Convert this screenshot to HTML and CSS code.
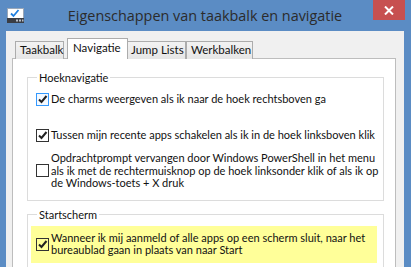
FILE: index.html
```html
<!DOCTYPE html>
<html lang="nl">
<head>
    <meta charset="UTF-8">
    <title>Eigenschappen van taakbalk en navigatie</title>
    <link rel="stylesheet" href="styles.css">
</head>
<body>

<div class="window">
    <!-- Title bar -->
    <div class="titlebar">
        <svg class="app-icon" width="18" height="16" viewBox="0 0 18 16">
            <rect x="0.5" y="0.5" width="16" height="10" fill="#fff" stroke="#9aa7b8"/>
            <path d="M4 5.5 L6.5 8 L11.5 2" fill="none" stroke="#1f7fe0" stroke-width="1.8"/>
            <rect x="0" y="10" width="17" height="5" fill="#3a3d44"/>
            <rect x="9" y="11.5" width="2" height="2" fill="#b8bec8"/>
            <rect x="12" y="11.5" width="2" height="2" fill="#b8bec8"/>
            <rect x="15" y="11.5" width="1.5" height="2" fill="#b8bec8"/>
        </svg>
        <div class="title">Eigenschappen van taakbalk en navigatie</div>
        <div class="close">
            <svg width="10" height="9" viewBox="0 0 10 9">
                <path d="M1 0.5 L9 8.5 M9 0.5 L1 8.5" stroke="#fff" stroke-width="2"/>
            </svg>
        </div>
    </div>

    <div class="dialog">
        <!-- Tabs -->
        <div class="tabs">
            <div class="tab tab-taakbalk">Taakbalk</div>
            <div class="tab tab-navigatie active">Navigatie</div>
            <div class="tab tab-jump">Jump Lists</div>
            <div class="tab tab-werkbalken">Werkbalken</div>
        </div>

        <div class="panel">
            <fieldset class="group corner">
                <legend>Hoeknavigatie</legend>
                <label class="option row-1">
                    <span class="box focus">
                        <svg width="11" height="11" viewBox="0 0 11 11"><path d="M2 5.5 L4.5 8 L9.5 2" fill="none" stroke="#222" stroke-width="2"/></svg>
                    </span>
                    <span>De charms weergeven als ik naar de hoek rechtsboven ga</span>
                </label>
                <label class="option row-2">
                    <span class="box">
                        <svg width="11" height="11" viewBox="0 0 11 11"><path d="M2 5.5 L4.5 8 L9.5 2" fill="none" stroke="#222" stroke-width="2"/></svg>
                    </span>
                    <span>Tussen mijn recente apps schakelen als ik in de hoek linksboven klik</span>
                </label>
                <label class="option row-3">
                    <span class="box"></span>
                    <span>Opdrachtprompt vervangen door Windows PowerShell in het menu<br>als ik met de rechtermuisknop op de hoek linksonder klik of als ik op<br>de Windows-toets + X druk</span>
                </label>
            </fieldset>

            <fieldset class="group start">
                <legend>Startscherm</legend>
                <div class="highlight">
                    <label class="option">
                        <span class="box clear">
                            <svg width="11" height="11" viewBox="0 0 11 11"><path d="M2 5.5 L4.5 8 L9.5 2" fill="none" stroke="#222" stroke-width="2"/></svg>
                        </span>
                        <span>Wanneer ik mij aanmeld of alle apps op een scherm sluit, naar het<br>bureaublad gaan in plaats van naar Start</span>
                    </label>
                </div>
            </fieldset>
        </div>
    </div>
</div>

</body>
</html>
```

FILE: styles.css
```css
/* Window frame */
body {
    margin: 0;
    background-color: #5b8cc4;
    font-family: Lato, "Open Sans", sans-serif;
    font-size: 11px;
    letter-spacing: 0;
    color: #111;
    overflow: hidden;
}

.window {
    height: 267px;
    padding: 0 7px 0 6px;
}

.titlebar {
    height: 31px;
    display: flex;
    align-items: flex-start;
}

.app-icon {
    margin: 8px 0 0 1px;
}

.title {
    flex: 1;
    text-align: center;
    font-family: "Open Sans", sans-serif;
    font-size: 14.4px;
    color: #2b2b2b;
    line-height: 31px;
    padding-left: 12px;
}

.close {
    width: 32px;
    height: 20px;
    margin-right: -1px;
    background-color: #c75050;
    display: flex;
    align-items: center;
    justify-content: center;
}

/* Dialog body */
.dialog {
    background-color: #f0f0f0;
    height: 236px;
    padding: 7px 8px 0 6px;
}

.tabs {
    display: flex;
    align-items: flex-start;
    height: 21px;
}

.tab {
    box-sizing: border-box;
    margin-top: 3px;
    height: 18px;
    border: 1px solid #acacac;
    border-bottom: none;
    background: linear-gradient(#f2f2f2, #e6e6e6);
    line-height: 16px;
    font-size: 11.5px;
}

.tab.active {
    margin-top: 0;
    height: 21px;
    background: #fff;
    position: relative;
    z-index: 1;
    line-height: 18px;
}

.tab-taakbalk   { width: 49px; margin-left: 3px; padding-left: 4px; }
.tab-navigatie  { width: 61px; margin-left: 3px; padding-left: 5px; }
.tab-jump       { width: 59px; margin-left: -1px; padding-left: 3px; }
.tab-werkbalken { width: 67px; padding-left: 4px; }

.panel {
    background-color: #fff;
    border: 1px solid #bdbdbd;
    border-bottom: none;
    height: 220px;
    margin-top: -1px;
    padding: 0 11px 0 14px;
}

/* Group boxes */
.group {
    margin: 12px 0 0;
    border: 1px solid #dcdcdc;
    padding: 0 3px 10px 3px;
}

.group legend {
    padding: 0 2px;
    margin-left: 6px;
    line-height: 13px;
}

.group.start {
    margin-top: 7px;
    padding: 5px 6px 6px 3px;
}

.option {
    display: flex;
    align-items: center;
    line-height: 12.5px;
    padding-left: 5px;
}

.row-1 { margin-top: 9px; }
.row-2 { margin-top: 23px; }
.row-3 { margin-top: 10px; }

.option .box {
    flex: none;
    width: 11px;
    height: 11px;
    border: 1px solid #333;
    background-color: #fff;
    margin-right: 2px;
    display: flex;
}

.option .box.focus {
    border-color: #3399ff;
    background-color: #f4f9ff;
}

.option .box.clear {
    background-color: transparent;
}

.highlight {
    background-color: #ffff99;
    padding: 6px 0;
}
```
